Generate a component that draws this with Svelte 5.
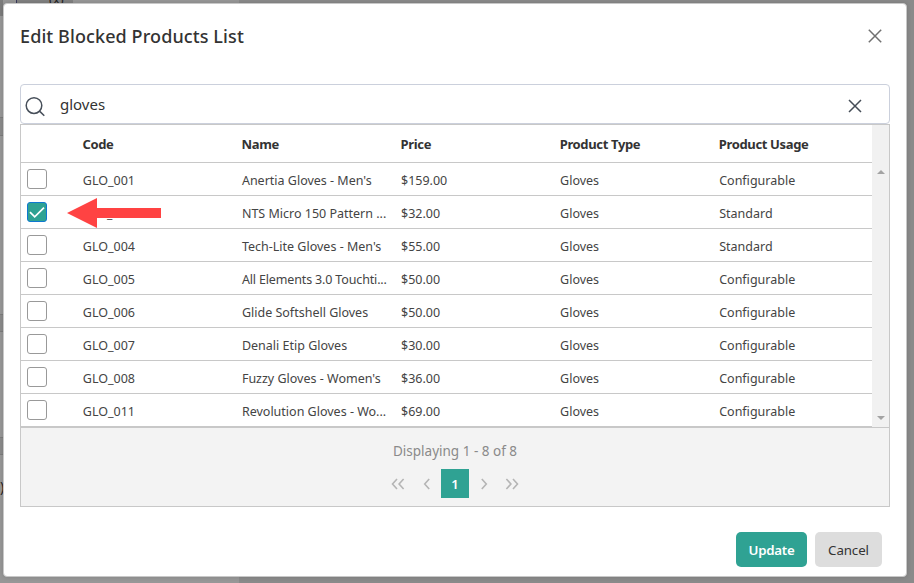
<script>
  const columns = ['Code', 'Name', 'Price', 'Product Type', 'Product Usage'];
  const rows = $state([
    { code: 'GLO_001', name: "Anertia Gloves - Men's", price: '$159.00', usage: 'Configurable', checked: false },
    { code: 'GLO_003', name: 'NTS Micro 150 Pattern ...', price: '$32.00', usage: 'Standard', checked: true },
    { code: 'GLO_004', name: "Tech-Lite Gloves - Men's", price: '$55.00', usage: 'Standard', checked: false },
    { code: 'GLO_005', name: 'All Elements 3.0 Touchti...', price: '$50.00', usage: 'Configurable', checked: false },
    { code: 'GLO_006', name: 'Glide Softshell Gloves', price: '$50.00', usage: 'Configurable', checked: false },
    { code: 'GLO_007', name: 'Denali Etip Gloves', price: '$30.00', usage: 'Configurable', checked: false },
    { code: 'GLO_008', name: "Fuzzy Gloves - Women's", price: '$36.00', usage: 'Configurable', checked: false },
    { code: 'GLO_011', name: 'Revolution Gloves - Wo...', price: '$69.00', usage: 'Configurable', checked: false }
  ]);
</script>

<div class="page">
  <div class="behind">
    <span class="shade top"></span>
    <span class="tab"></span>
    <span class="fx">(x)</span>
    <span class="paren">)</span>
    <span class="shade s1"></span>
    <span class="shade s2"></span>
    <span class="shade s3"></span>
  </div>
  <section class="dialog" role="dialog" aria-label="Edit Blocked Products List">
    <header>
      <h1>Edit Blocked Products List</h1>
      <button class="close" aria-label="Close">
        <svg width="14" height="14" viewBox="0 0 14 14"><path d="M.8.8l12.4 12.4M13.2.8L.8 13.2" /></svg>
      </button>
    </header>

    <div class="search">
      <svg class="lens" width="20" height="20" viewBox="0 0 20 20"><circle cx="9" cy="8.6" r="7.8" /><path d="M14.5 14.1l4.8 4.7" /></svg>
      <span class="query">gloves</span>
      <svg class="clear" width="14" height="14" viewBox="0 0 14 14"><path d="M1 1l12 12M13 1L1 13" /></svg>
    </div>

    <div class="grid">
      <div class="body">
        <div class="table">
          <div class="row head">
            <span></span>
            {#each columns as column}<span>{column}</span>{/each}
          </div>
          {#each rows as row}
            <div class="row">
              <button class="check" class:on={row.checked} role="checkbox" aria-checked={row.checked} aria-label={row.code} onclick={() => (row.checked = !row.checked)}>
                {#if row.checked}
                  <svg width="18" height="18" viewBox="0 0 18 18"><path d="M2 9.1l4.7 4.8L16 4.6" /></svg>
                {/if}
              </button>
              <span class:covered={row.checked}>{row.code}</span>
              <span class:long={row.name.startsWith('All')}>{row.name}</span>
              <span>{row.price}</span>
              <span>Gloves</span>
              <span>{row.usage}</span>
            </div>
          {/each}
        </div>
        <div class="scroll">
          <svg width="8" height="4" viewBox="0 0 8 4"><path d="M0 4L4 0l4 4z" /></svg>
          <svg width="8" height="4" viewBox="0 0 8 4"><path d="M0 0h8L4 4z" /></svg>
        </div>
        <svg class="arrow" width="95" height="31" viewBox="0 0 95 31"><path d="M0 16L30 1V11H94V21H30V31z" /></svg>
      </div>
      <footer class="pager">
        <p>Displaying 1 - 8 of 8</p>
        <nav>
          <svg width="14" height="12" viewBox="0 0 14 12"><path d="M6 1L1.5 6 6 11M12.6 1L8.1 6l4.5 5" /></svg>
          <svg class="prev" width="8" height="12" viewBox="0 0 8 12"><path d="M6.2 1L1.7 6l4.5 5" /></svg>
          <span class="current">1</span>
          <svg class="next" width="8" height="12" viewBox="0 0 8 12"><path d="M1.8 1l4.5 5-4.5 5" /></svg>
          <svg width="14" height="12" viewBox="0 0 14 12"><path d="M1.4 1l4.5 5-4.5 5M8 1l4.5 5L8 11" /></svg>
        </nav>
      </footer>
    </div>

    <div class="actions">
      <button class="primary"><span>Update</span></button>
      <button><span>Cancel</span></button>
    </div>
  </section>
</div>

<style>
  .page {
    position: relative;
    box-sizing: border-box;
    width: 914px;
    height: 583px;
    padding: 3px 0 0 3px;
    overflow: hidden;
    background: linear-gradient(90deg, #979797 239px, #8a8a8a 239px);
    font-family: "Noto Sans", "Open Sans", sans-serif;
    color: #333;
  }
  .behind span { position: absolute; }
  .shade { left: 0; width: 3px; background: #8a8a8a; box-sizing: border-box; border-top: 1px solid #7c7c7c; border-bottom: 1px solid #7c7c7c; }
  .top { top: 0; height: 16px; background: #7b7b7b; }
  .s1 { top: 117px; height: 19px; }
  .s2 { top: 314px; height: 18px; }
  .s3 { top: 437px; height: 18px; }
  .tab { left: 16px; top: 0; width: 57px; height: 3px; background: #808080; border-left: 1px solid #39395c; box-sizing: border-box; }
  .fx { left: 49px; top: -8px; font-size: 13px; line-height: 14px; color: #222; }
  .paren { left: 0; top: 479px; font-size: 14px; line-height: 16px; color: #222; }

  .dialog {
    position: relative;
    box-sizing: border-box;
    width: 904px;
    height: 574px;
    padding: 0 17px 0 16px;
    background: #fff;
    border: 1px solid #c8c8c8;
    border-radius: 4px;
    box-shadow: 0 0 4px rgba(0, 0, 0, .15);
  }
  header { display: flex; justify-content: space-between; height: 80px; }
  h1 { margin: 19px 0 0; font-size: 18px; font-weight: 500; line-height: 26px; letter-spacing: .1px; white-space: nowrap; }
  button { font: inherit; padding: 0; border: 0; background: none; color: inherit; display: block; }
  svg { display: block; fill: none; }
  .close { margin: 25px 7.5px 0 0; height: 14px; }
  .close path { stroke: #707070; stroke-width: 1.5; }

  .search {
    display: flex;
    box-sizing: border-box;
    width: 870px;
    height: 40px;
    padding-left: 4px;
    border: 1px solid #cbd0dc;
    border-radius: 4px;
  }
  .lens { margin-top: 12px; stroke: #474f5a; stroke-width: 1.5; }
  .query { flex: 1; margin-left: 15px; font-size: 15px; line-height: 38px; }
  .clear { margin: 14px 27.5px 0 0; stroke: #454d57; stroke-width: 1.5; }

  .grid { box-sizing: border-box; width: 870px; border: 1px solid #c8c8c8; }
  .body { position: relative; display: flex; height: 302px; border-bottom: 1px solid #c8c8c8; }
  .table { width: 851px; }
  .row {
    display: grid;
    grid-template-columns: 61.8px repeat(5, 159.1px);
    width: 851px;
    height: 33px;
    box-sizing: border-box;
    border-bottom: 1px solid #c8c8c8;
    overflow: hidden;
    font-size: 12.5px;
    line-height: 35px;
    color: #444;
    white-space: nowrap;
  }
  .long { letter-spacing: -.15px; }
  .covered { font-size: 12px; line-height: 36px; }
  .head { grid-template-columns: 61.4px repeat(5, 159.1px); height: 38px; font-size: 13px; font-weight: 700; line-height: 38px; letter-spacing: -.35px; color: #333; }
  .check { box-sizing: border-box; width: 20px; height: 20px; margin: 6px 0 0 6px; border: 1px solid #999; border-radius: 3px; background: #fff; }
  .on { background: #2fa293; border-color: #0f78d0; }
  .on path { stroke: #fff; stroke-width: 1.7; }
  .scroll {
    display: flex;
    flex-direction: column;
    align-items: center;
    justify-content: space-between;
    box-sizing: border-box;
    width: 17px;
    padding: 45px 0 7px;
    background: #f1f1f1;
  }
  .scroll path { fill: #a3a3a3; }
  .arrow { position: absolute; left: 46px; top: 72px; }
  .arrow path { fill: #ff4343; }

  .pager { height: 78px; background: #f3f3f3; display: flex; flex-direction: column; align-items: center; }
  .pager p { margin: 13px 0 0; font-size: 13.5px; line-height: 20px; color: #8a8a8a; white-space: nowrap; }
  nav { display: flex; align-items: center; margin-top: 8px; stroke: #b5b5b5; stroke-width: 1.6; }
  .current { width: 28px; height: 29px; background: #2fa293; color: #fff; font-size: 13px; font-weight: 600; line-height: 30px; text-align: center; }
  .prev { margin: 0 10.5px 0 17.5px; }
  .next { margin: 0 17.5px 0 10.5px; }

  .actions { display: flex; justify-content: flex-end; gap: 8px; margin: 25px 7px 0 0; font-size: 13.3px; }
  .actions button { width: 67px; height: 35px; border-radius: 5px; background: #ddd; line-height: 37px; }
  .actions button span { letter-spacing: -.1px; }
  .actions .primary { width: 71px; background: #2fa293; color: #fff; font-weight: 600; }
  .actions .primary span { letter-spacing: -.25px; }
</style>
